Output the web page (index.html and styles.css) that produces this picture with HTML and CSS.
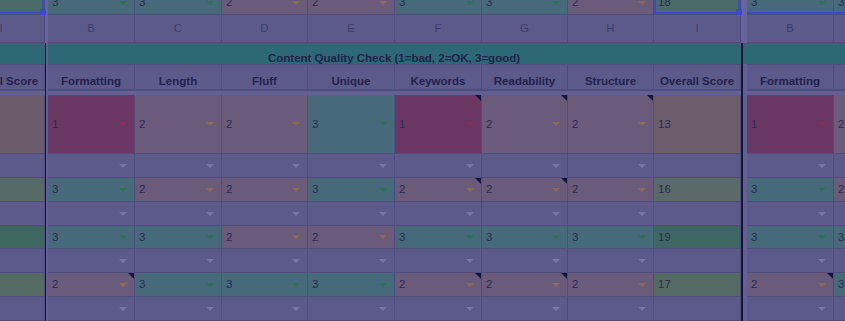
FILE: index.html
```html
<!DOCTYPE html>
<html>
<head>
<meta charset="utf-8">
<title>Content Quality Check</title>
<link rel="stylesheet" href="styles.css">
</head>
<body>
<div class="sheet">
  <div class="dv1-top"></div>
  <div class="dv1"></div>
  <div class="dv2-top"></div>
  <div class="dv2"></div>
  <div class="sep"></div>

  <!-- row: partial top -->
  <div class="c ov-top sel"></div>
  <div class="c g dd"><span>3</span><i class="ar"></i></div>
  <div class="c g dd"><span>3</span><i class="ar"></i></div>
  <div class="c m dd"><span>2</span><i class="ar"></i></div>
  <div class="c m dd"><span>2</span><i class="ar"></i></div>
  <div class="c g dd"><span>3</span><i class="ar"></i></div>
  <div class="c g dd"><span>3</span><i class="ar"></i></div>
  <div class="c m dd"><span>2</span><i class="ar"></i></div>
  <div class="c o18 sel"><span>18</span></div>
  <div class="c g dd selb"><span>3</span><i class="ar"></i></div>
  <div class="c g dd selb"><span>3</span><i class="ar"></i></div>

  <!-- column letters -->
  <div class="c hd">I</div>
  <div class="c hd">B</div>
  <div class="c hd">C</div>
  <div class="c hd">D</div>
  <div class="c hd">E</div>
  <div class="c hd">F</div>
  <div class="c hd">G</div>
  <div class="c hd">H</div>
  <div class="c hd">I</div>
  <div class="c hd">B</div>
  <div class="c hd">C</div>

  <!-- banner -->
  <div class="c teal"></div>
  <div class="c teal banner">Content Quality Check (1=bad, 2=OK, 3=good)</div>
  <div class="c teal"></div>
  <div class="c teal"></div>

  <!-- labels -->
  <div class="c lb">Overall Score</div>
  <div class="c lb">Formatting</div>
  <div class="c lb">Length</div>
  <div class="c lb">Fluff</div>
  <div class="c lb">Unique</div>
  <div class="c lb">Keywords</div>
  <div class="c lb">Readability</div>
  <div class="c lb">Structure</div>
  <div class="c lb">Overall Score</div>
  <div class="c lb">Formatting</div>
  <div class="c lb">Length</div>

  <!-- data row 1 -->
  <div class="c ov-a"></div>
  <div class="c r dd"><span>1</span><i class="ar"></i></div>
  <div class="c m dd"><span>2</span><i class="ar"></i></div>
  <div class="c m dd"><span>2</span><i class="ar"></i></div>
  <div class="c g dd"><span>3</span><i class="ar"></i></div>
  <div class="c r dd nt"><span>1</span><i class="ar"></i></div>
  <div class="c m dd nt"><span>2</span><i class="ar"></i></div>
  <div class="c m dd nt"><span>2</span><i class="ar"></i></div>
  <div class="c o13"><span>13</span></div>
  <div class="c r dd"><span>1</span><i class="ar"></i></div>
  <div class="c m dd"><span>2</span><i class="ar"></i></div>

  <!-- empty -->
  <div class="c"></div>
  <div class="c dd"><i class="ar"></i></div>
  <div class="c dd"><i class="ar"></i></div>
  <div class="c dd"><i class="ar"></i></div>
  <div class="c dd"><i class="ar"></i></div>
  <div class="c dd"><i class="ar"></i></div>
  <div class="c dd"><i class="ar"></i></div>
  <div class="c dd"><i class="ar"></i></div>
  <div class="c"></div>
  <div class="c dd"><i class="ar"></i></div>
  <div class="c dd"><i class="ar"></i></div>

  <!-- data row 2 -->
  <div class="c ov-b"></div>
  <div class="c g dd"><span>3</span><i class="ar"></i></div>
  <div class="c m dd"><span>2</span><i class="ar"></i></div>
  <div class="c m dd"><span>2</span><i class="ar"></i></div>
  <div class="c g dd"><span>3</span><i class="ar"></i></div>
  <div class="c m dd nt"><span>2</span><i class="ar"></i></div>
  <div class="c m dd nt"><span>2</span><i class="ar"></i></div>
  <div class="c m dd"><span>2</span><i class="ar"></i></div>
  <div class="c o16"><span>16</span></div>
  <div class="c g dd"><span>3</span><i class="ar"></i></div>
  <div class="c m dd"><span>2</span><i class="ar"></i></div>

  <!-- empty -->
  <div class="c"></div>
  <div class="c dd"><i class="ar"></i></div>
  <div class="c dd"><i class="ar"></i></div>
  <div class="c dd"><i class="ar"></i></div>
  <div class="c dd"><i class="ar"></i></div>
  <div class="c dd"><i class="ar"></i></div>
  <div class="c dd"><i class="ar"></i></div>
  <div class="c dd"><i class="ar"></i></div>
  <div class="c"></div>
  <div class="c dd"><i class="ar"></i></div>
  <div class="c dd"><i class="ar"></i></div>

  <!-- data row 3 -->
  <div class="c ov-c"></div>
  <div class="c g dd"><span>3</span><i class="ar"></i></div>
  <div class="c g dd"><span>3</span><i class="ar"></i></div>
  <div class="c m dd"><span>2</span><i class="ar"></i></div>
  <div class="c m dd"><span>2</span><i class="ar"></i></div>
  <div class="c g dd"><span>3</span><i class="ar"></i></div>
  <div class="c g dd"><span>3</span><i class="ar"></i></div>
  <div class="c g dd"><span>3</span><i class="ar"></i></div>
  <div class="c o19"><span>19</span></div>
  <div class="c g dd"><span>3</span><i class="ar"></i></div>
  <div class="c g dd"><span>3</span><i class="ar"></i></div>

  <!-- empty -->
  <div class="c"></div>
  <div class="c dd"><i class="ar"></i></div>
  <div class="c dd"><i class="ar"></i></div>
  <div class="c dd"><i class="ar"></i></div>
  <div class="c dd"><i class="ar"></i></div>
  <div class="c dd"><i class="ar"></i></div>
  <div class="c dd"><i class="ar"></i></div>
  <div class="c dd"><i class="ar"></i></div>
  <div class="c"></div>
  <div class="c dd"><i class="ar"></i></div>
  <div class="c dd"><i class="ar"></i></div>

  <!-- data row 4 -->
  <div class="c ov-d"></div>
  <div class="c m dd nt"><span>2</span><i class="ar"></i></div>
  <div class="c g dd"><span>3</span><i class="ar"></i></div>
  <div class="c g dd"><span>3</span><i class="ar"></i></div>
  <div class="c g dd"><span>3</span><i class="ar"></i></div>
  <div class="c m dd nt"><span>2</span><i class="ar"></i></div>
  <div class="c m dd nt"><span>2</span><i class="ar"></i></div>
  <div class="c m dd"><span>2</span><i class="ar"></i></div>
  <div class="c o17"><span>17</span></div>
  <div class="c m dd nt"><span>2</span><i class="ar"></i></div>
  <div class="c g dd"><span>3</span><i class="ar"></i></div>

  <!-- empty -->
  <div class="c"></div>
  <div class="c dd"><i class="ar"></i></div>
  <div class="c dd"><i class="ar"></i></div>
  <div class="c dd"><i class="ar"></i></div>
  <div class="c dd"><i class="ar"></i></div>
  <div class="c dd"><i class="ar"></i></div>
  <div class="c dd"><i class="ar"></i></div>
  <div class="c dd"><i class="ar"></i></div>
  <div class="c"></div>
  <div class="c dd"><i class="ar"></i></div>
  <div class="c dd"><i class="ar"></i></div>
</div>
</body>
</html>
```

FILE: styles.css
```css
* { box-sizing: border-box; }

html, body {
  margin: 0;
  padding: 0;
}

body {
  width: 845px;
  height: 321px;
  overflow: hidden;
  background: #5c5a8b;
  font-family: "Liberation Sans", Arial, sans-serif;
  font-size: 11.5px;
  color: #2a2954;
}

.sheet {
  display: grid;
  width: max-content;
  margin: -9px 0 0 -42px;
  grid-template-columns: 87px 3px 87px 87px 86px 87px 87px 86px 86px 87px 6px 87px 87px;
  grid-template-rows: 24px 28px 22px 25px 5px 59px 24px 24px 24px 23px 24px 24px 24px;
}

.c {
  position: relative;
  display: flex;
  align-items: center;
  padding-left: 4px;
  border-right: 1px solid #4f4d7e;
  border-bottom: 1px solid #4f4d7e;
  background: #5c5a8b;
  white-space: nowrap;
  line-height: 13px;
}

/* dividers */
.dv1-top, .dv2-top {
  grid-row: 1 / 3;
  background: #66649a;
}
.dv1-top { grid-column: 2; }
.dv2-top { grid-column: 11; }

.dv1 {
  grid-column: 2;
  grid-row: 3 / -1;
  border-left: 1px solid #15163a;
  background: #615f93;
  z-index: 2;
}
.dv2 {
  grid-column: 11;
  grid-row: 3 / -1;
  border-left: 2px solid #15163a;
  background: linear-gradient(#2d6877 0 21px, #625f93 21px);
  z-index: 2;
}

.sep {
  grid-column: 1 / -1;
  grid-row: 5;
  background: #625f94;
  border-top: 1px solid #4f4d7e;
}

/* column letters */
.hd {
  justify-content: center;
  padding-left: 0;
  color: #3d3c6c;
  font-size: 11.5px;
}

/* banner */
.teal {
  background: #2d6877;
  border-right-color: #2d6877;
}
.banner {
  grid-column: span 8;
  justify-content: center;
  align-items: flex-end;
  padding-left: 0;
  font-weight: bold;
  color: #1f2249;
  line-height: 12px;
}

/* labels */
.lb {
  justify-content: center;
  align-items: flex-end;
  padding-left: 0;
  padding-bottom: 1px;
  font-weight: bold;
  color: #23224a;
}

/* value colours */
.r { background: #6a3763; }
.m { background: #6b5b7b; }
.g { background: #466a79; }

.o13 { background: #6b5d6a; }
.o16 { background: #5a6a68; }
.o19 { background: #3f6762; }
.o17 { background: #566a64; }
.o18 { background: #4c6a68; }

.ov-top { background: #4a6a67; }
.ov-a { background: #6a5c6b; }
.ov-b { background: #556a66; }
.ov-c { background: #3e6760; }
.ov-d { background: #546a63; }

/* dropdown arrow */
.ar {
  margin-left: auto;
  margin-right: 7px;
  width: 0;
  height: 0;
  border-left: 4px solid transparent;
  border-right: 4px solid transparent;
  border-top: 4px solid #7876a8;
}
.r .ar { border-top-color: #8a2d5b; }
.m .ar { border-top-color: #8f6a56; }
.g .ar { border-top-color: #2e7153; }

/* note indicator */
.nt::after {
  content: "";
  position: absolute;
  top: 0;
  right: 0;
  border-top: 6px solid #12143a;
  border-left: 6px solid transparent;
}

/* selection */
.sel {
  box-shadow: inset 0 0 0 2px #3b4bc6;
}
.sel::after {
  content: "";
  position: absolute;
  right: -2px;
  bottom: -1px;
  width: 6px;
  height: 6px;
  background: #3b4bc6;
  z-index: 3;
}
.selb {
  box-shadow: inset 0 -2px 0 #3b4bc6;
}
```
